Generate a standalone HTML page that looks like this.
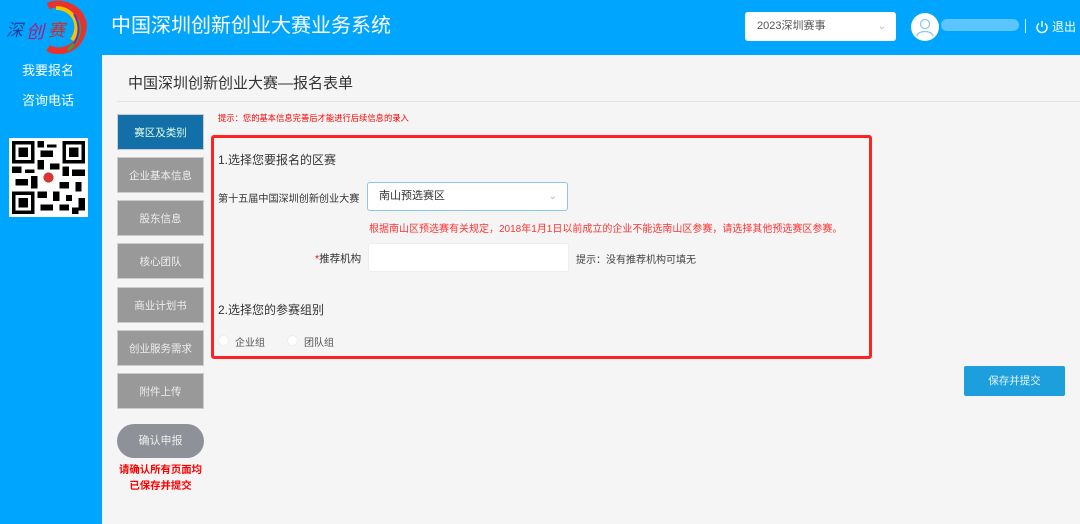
<!DOCTYPE html>
<html><head><meta charset="utf-8"><style>
*{margin:0;padding:0;box-sizing:border-box}
body{width:1080px;height:524px;overflow:hidden;background:#f5f5f5;font-family:"Liberation Sans","Noto Sans CJK SC",sans-serif;position:relative}
.a{position:absolute;white-space:nowrap}
.hdr{left:0;top:0;width:1080px;height:55px;background:#00a6fd}
.side{left:0;top:55px;width:102px;height:469px;background:#00a6fd}
.nav{left:117px;width:87px;height:36px;background:#999;color:#eee;font-size:10.5px;text-align:center;line-height:36px;border:1px solid #ccc}
.red{color:#f00}
</style></head><body>
<div class="a hdr"></div>
<div class="a side"></div>
<svg class="a" style="left:4px;top:0px" width="84" height="54" viewBox="0 0 84 54">
<path d="M44 6 C64 -2 88 16 76 38 C70 50 54 54 44 48" fill="none" stroke="#e8322d" stroke-width="7"/>
<path d="M52 8 C70 8 78 26 68 40" fill="none" stroke="#f5c400" stroke-width="4"/>
<path d="M74 20 C78 32 74 42 64 50" fill="none" stroke="#2aa84a" stroke-width="3"/>
<path d="M70 14 C76 24 76 34 70 44" fill="none" stroke="#7a2bb5" stroke-width="2"/>
<text x="2" y="36" font-size="17" fill="#1f3d9a" font-style="italic" font-family="Noto Sans CJK SC">深</text>
<text x="22" y="38" font-size="18" fill="#b0187a" font-style="italic" font-family="Noto Sans CJK SC">创</text>
<text x="44" y="36" font-size="17" fill="#d12a2a" font-style="italic" font-family="Noto Sans CJK SC">赛</text>
</svg>
<div class="a" style="left:111px;top:11px;color:#fff;font-size:20px;line-height:30px">中国深圳创新创业大赛业务系统</div>
<div class="a" style="left:745px;top:12px;width:151px;height:29px;background:#fff;border-radius:3px;font-size:11px;color:#555;line-height:29px;padding-left:12px">2023深圳赛事<span style="position:absolute;right:10px;top:0;color:#bbb;font-size:10px">&#8964;</span></div>
<div class="a" style="left:911px;top:13px;width:28px;height:28px;border-radius:50%;background:#fff"><svg width="28" height="28" viewBox="0 0 28 28"><circle cx="14" cy="11" r="4.5" fill="none" stroke="#8cc8f0" stroke-width="1.3"/><path d="M6 23 C7 17 21 17 22 23" fill="none" stroke="#8cc8f0" stroke-width="1.3"/></svg></div>
<div class="a" style="left:941px;top:19px;width:78px;height:12px;background:#5cc4ff;border-radius:6px"></div>
<div class="a" style="left:1025px;top:19px;width:1px;height:14px;background:#dff"></div>
<svg class="a" style="left:1035px;top:20px" width="14" height="14" viewBox="0 0 14 14"><path d="M4 3.5 A5 5 0 1 0 10 3.5" fill="none" stroke="#fff" stroke-width="1.4"/><path d="M7 1v6" stroke="#fff" stroke-width="1.4"/></svg>
<div class="a" style="left:1052px;top:18px;color:#fff;font-size:12px">退出</div>
<div class="a" style="left:22px;top:61px;color:#fff;font-size:13px;line-height:20px">我要报名</div>
<div class="a" style="left:22px;top:91px;color:#fff;font-size:13px;line-height:20px">咨询电话</div>
<svg class="a" style="left:9px;top:138px" width="79" height="79" viewBox="0 0 25 25" shape-rendering="crispEdges"><rect width="25" height="25" fill="#fff"/>
<g fill="#000"><path d="M1 1h7v7h-7zM17 1h7v7h-7zM1 17h7v7h-7z"/></g><g fill="#fff"><path d="M2 2h5v5h-5zM18 2h5v5h-5zM2 18h5v5h-5z"/></g><g fill="#000"><path d="M3 3h3v3h-3zM19 3h3v3h-3zM3 19h3v3h-3z"/>
<path d="M9 1h2v2h-2zM12 2h3v1h-3zM10 4h4v2h-4zM9 7h2v3h-2zM13 8h3v2h-3zM1 9h3v2h-3zM5 10h3v1h-3zM17 9h2v3h-2zM20 10h4v2h-4zM2 13h4v2h-4zM7 12h2v4h-2zM16 14h3v2h-3zM21 14h2v3h-2zM9 17h3v2h-3zM14 17h2v3h-2zM18 18h2v2h-2zM22 19h2v4h-2zM10 21h4v2h-4zM16 21h3v2h-3zM20 22h2v2h-2z"/></g>
<circle cx="12.5" cy="12.5" r="2.6" fill="#fff"/><circle cx="12.5" cy="12.5" r="1.6" fill="#d33"/></svg>
<div class="a" style="left:128px;top:72px;font-size:15px;color:#333">中国深圳创新创业大赛—报名表单</div>
<div class="a" style="left:117px;top:101px;width:963px;height:1px;background:#e3e3e3"></div>
<div class="a nav" style="top:114px;background:#136fa7;color:#dfe">赛区及类别</div>
<div class="a nav" style="top:157px">企业基本信息</div>
<div class="a nav" style="top:200px">股东信息</div>
<div class="a nav" style="top:243px">核心团队</div>
<div class="a nav" style="top:287px">商业计划书</div>
<div class="a nav" style="top:330px">创业服务需求</div>
<div class="a nav" style="top:373px">附件上传</div>
<div class="a" style="left:117px;top:424px;width:87px;height:34px;border-radius:17px;background:#8e9197;color:#eee;font-size:11px;text-align:center;line-height:34px">确认申报</div>
<div class="a red" style="left:110px;top:463px;width:101px;text-align:center;font-size:10.4px;font-weight:bold;line-height:16px">请确认所有页面均<br>已保存并提交</div>
<div class="a red" style="left:218px;top:112px;font-size:8.3px">提示：您的基本信息完善后才能进行后续信息的录入</div>
<div class="a" style="left:211px;top:135px;width:661px;height:224px;border:3px solid #f22;border-radius:3px"></div>
<div class="a" style="left:218px;top:151px;font-size:12px;color:#333">1.选择您要报名的区赛</div>
<div class="a" style="left:218px;top:190px;font-size:10.1px;color:#333">第十五届中国深圳创新创业大赛</div>
<div class="a" style="left:367px;top:182px;width:201px;height:29px;background:#fff;border:1px solid #8cc4f4;border-radius:3px;font-size:11px;color:#333;line-height:27px;padding-left:11px">南山预选赛区<span style="position:absolute;right:10px;top:0;color:#bbb;font-size:10px">&#8964;</span></div>
<div class="a" style="left:369px;top:220px;font-size:10px;color:#f33">根据南山区预选赛有关规定，2018年1月1日以前成立的企业不能选南山区参赛，请选择其他预选赛区参赛。</div>
<div class="a" style="left:315px;top:251px;font-size:10.5px;color:#333"><span class="red">*</span>推荐机构</div>
<div class="a" style="left:368px;top:243px;width:201px;height:29px;background:#fff;border:1px solid #eee;border-radius:3px"></div>
<div class="a" style="left:576px;top:251px;font-size:10px;color:#444">提示：没有推荐机构可填无</div>
<div class="a" style="left:218px;top:301px;font-size:12px;color:#333">2.选择您的参赛组别</div>
<div class="a" style="left:218px;top:335px;width:11px;height:11px;border-radius:50%;background:#fff;border:1px solid #eee"></div>
<div class="a" style="left:235px;top:334px;font-size:10px;color:#555">企业组</div>
<div class="a" style="left:287px;top:335px;width:11px;height:11px;border-radius:50%;background:#fff;border:1px solid #eee"></div>
<div class="a" style="left:304px;top:334px;font-size:10px;color:#555">团队组</div>
<div class="a" style="left:964px;top:366px;width:101px;height:30px;background:#1c9fdc;color:#e6f4fc;font-size:10.5px;text-align:center;line-height:30px;border-radius:2px">保存并提交</div>
</body></html>
